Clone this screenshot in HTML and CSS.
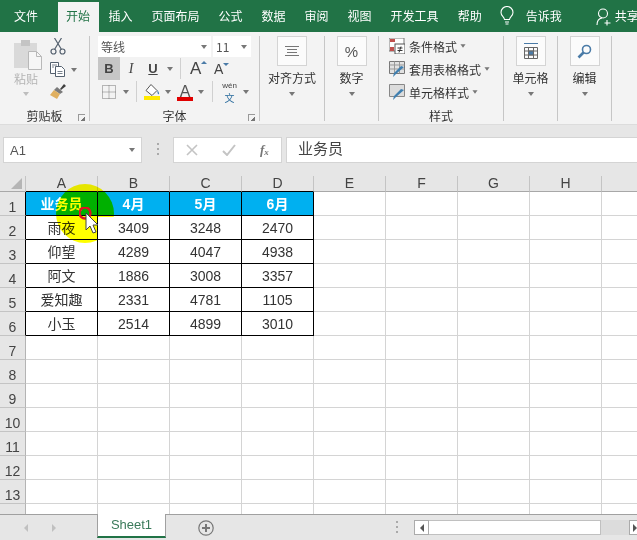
FILE: index.html
```html
<!DOCTYPE html>
<html lang="zh-CN">
<head>
    <meta charset="UTF-8">
    <title>Excel</title>
    <link rel="stylesheet" href="styles.css">
</head>
<body>
    <div class="window">
        <!-- Tabs -->
        <nav class="tabbar">
            <span class="tab tab-file">文件</span>
            <span class="tab tab-active">开始</span>
            <span class="tab">插入</span>
            <span class="tab">页面布局</span>
            <span class="tab">公式</span>
            <span class="tab">数据</span>
            <span class="tab">审阅</span>
            <span class="tab">视图</span>
            <span class="tab">开发工具</span>
            <span class="tab">帮助</span>
            <svg class="tab-bulb" width="14" height="20" viewBox="0 0 14 20" fill="none" stroke="#fff" stroke-width="1.1"><path d="M4.5 13.5C4 10.5 1 10 1 6.5a6 6 0 0 1 12 0c0 3.500-3 4-3.500 7z"/><path d="M5 16h4M5.500 18h3"/></svg>
            <span class="tab tab-tell">告诉我</span>
            <svg class="tab-person" width="15" height="18" viewBox="0 0 15 18" fill="none" stroke="#fff" stroke-width="1.1"><circle cx="7" cy="5.500" r="4.500"/><path d="M1 17c0-4 2-6.500 5-7M11 12v5.500M8.500 15h6"/></svg>
            <span class="tab-share">共享</span>
        </nav>

        <!-- Ribbon -->
        <section class="ribbon">
            <div class="group group-clip">
                <div class="group-body clip-body">
                    <div class="paste">
                        <svg class="paste-icon" width="28" height="30" viewBox="0 0 28 30"><rect y="3" width="23" height="25" fill="#d9d9d9"/><rect x="7" y="0" width="9" height="6" fill="#c4c4c4"/><path d="M14.500 11.500h8l5 5v13h-13z" fill="#f6f6f6" stroke="#b8b8b8"/><path d="M22.500 11.500v5h5" fill="none" stroke="#b8b8b8"/></svg>
                        <span class="paste-label">粘贴</span>
                        <span class="caret caret-light"></span>
                    </div>
                    <div class="clip-tools">
                        <svg width="16" height="17" viewBox="0 0 16 17" fill="none" stroke="#55616f" stroke-width="1.200"><circle cx="3.500" cy="13.500" r="2.500"/><circle cx="12.500" cy="13.500" r="2.500"/><path d="M4.500 11.500 11.500 0M11.500 11.500 4.500 0"/></svg>
                        <div class="tool-row">
                            <svg width="16" height="15" viewBox="0 0 16 15" fill="#fff" stroke="#55616f"><path d="M.5.5h8v11h-8z"/><path d="M5.500 4.500h6l3 3v7h-9z"/><path d="M2 3h5M2 5h2M7.500 9.500h5M7.500 11.500h5" fill="none" stroke-width=".8"/></svg>
                            <span class="caret"></span>
                        </div>
                        <svg width="16" height="15" viewBox="0 0 16 15"><path d="M10 5l4-5 2 2-5 4z" fill="#404040"/><path d="M7 3l6 5-3 2-6-4z" fill="#7a7a7a"/><path d="M4 6l6 4-3 5-7-4z" fill="#e0b060"/></svg>
                    </div>
                </div>
                <div class="group-label">剪贴板</div>
                <span class="launcher"></span>
            </div>

            <div class="group group-font">
                <div class="group-body font-body">
                    <div class="font-row font-combos">
                        <div class="combo combo-name"><span>等线</span><span class="caret"></span></div>
                        <div class="combo combo-size"><span>11</span><span class="caret"></span></div>
                    </div>
                    <div class="font-row">
                        <span class="fbtn fbtn-on"><b>B</b></span>
                        <span class="fbtn fbtn-i">I</span>
                        <span class="fbtn fbtn-u">U</span>
                        <span class="caret caret-u"></span>
                        <span class="font-sep sep-a"></span>
                        <span class="grow-a">A<i class="tip tip-up"></i></span>
                        <span class="grow-a grow-small">A<i class="tip tip-down"></i></span>
                    </div>
                    <div class="font-row">
                        <svg class="ico-border" width="14" height="14" viewBox="0 0 14 14" fill="none" stroke="#777" stroke-dasharray="1 1"><path d="M.5.5h13v13H.5zM7 .5v13M.5 7h13"/></svg>
                        <span class="caret caret-b"></span>
                        <span class="font-sep sep-b"></span>
                        <span class="fill-ico">
                            <svg width="16" height="12" viewBox="0 0 16 12" fill="#fff" stroke="#555"><path d="M7 .5l6 6-5 5-6-5z"/><path d="M13.500 6c1 2 2 3 1.500 4s-2 0-1.500-4z" fill="#3f7fb0" stroke="none"/></svg>
                            <span class="bar bar-yellow"></span>
                        </span>
                        <span class="caret caret-f"></span>
                        <span class="color-a">A<span class="bar bar-red"></span></span>
                        <span class="caret caret-f"></span>
                        <span class="font-sep sep-c"></span>
                        <span class="wen"><span class="wen-top">wén</span><span class="wen-zh">文</span></span>
                        <span class="caret caret-f"></span>
                    </div>
                </div>
                <div class="group-label">字体</div>
                <span class="launcher"></span>
            </div>

            <div class="group group-align">
                <div class="big-btn">
                    <span class="big-box"><svg width="14" height="10" viewBox="0 0 14 10" stroke="#777"><path d="M0 .5h14M2 3.500h10M2 6.500h10M0 9.500h14"/></svg></span>
                    <span class="big-label">对齐方式</span>
                    <span class="caret"></span>
                </div>
            </div>

            <div class="group group-num">
                <div class="big-btn">
                    <span class="big-box big-percent">%</span>
                    <span class="big-label">数字</span>
                    <span class="caret"></span>
                </div>
            </div>

            <div class="group group-style">
                <div class="group-body style-body">
                    <div class="style-row">
                        <svg width="16" height="16" viewBox="0 0 16 16"><rect width="15" height="13" fill="#fff" stroke="#777"/><rect x="1" y="1" width="5" height="3" fill="#c0504d"/><rect x="1" y="9" width="4" height="4" fill="#c0504d"/><rect x="6" y="6" width="10" height="10" fill="#fff" stroke="#555"/><path d="M8.500 10h5M8.500 12.500h5M12 8.500l-2 6" stroke="#333" fill="none"/></svg>
                        <span>条件格式</span><span class="caret"></span>
                    </div>
                    <div class="style-row">
                        <svg width="16" height="16" viewBox="0 0 16 16"><path d="M.5.5h15v12H.5z" fill="#e2e2e2" stroke="#777"/><path d="M.5 4h15M5.500.5v12M10.500.5v12M.5 8h15" stroke="#999"/><path d="M15 6l-8 7-3 3 1-4 7-7z" fill="#3f7fb0"/></svg>
                        <span>套用表格格式</span><span class="caret"></span>
                    </div>
                    <div class="style-row">
                        <svg width="16" height="16" viewBox="0 0 16 16"><path d="M.5.5h15v12H.5z" fill="#dcdcdc" stroke="#888"/><path d="M15 6l-8 7-3 3 1-4 7-7z" fill="#3f7fb0"/></svg>
                        <span>单元格样式</span><span class="caret"></span>
                    </div>
                </div>
                <div class="group-label">样式</div>
            </div>

            <div class="group group-cells">
                <div class="big-btn">
                    <span class="big-box"><svg width="16" height="16" viewBox="0 0 16 16" fill="none" stroke="#666"><path d="M1.500 4.500h13v11h-13zM1.500 8h13M1.500 12h13M5.500 4.500v11M10.500 4.500v11"/><path d="M1 .5h14" stroke="#4a7ba7"/><rect x="5.500" y="8" width="5" height="4" fill="#4a7ba7"/></svg></span>
                    <span class="big-label">单元格</span>
                    <span class="caret"></span>
                </div>
            </div>

            <div class="group group-edit">
                <div class="big-btn">
                    <span class="big-box"><svg width="15" height="15" viewBox="0 0 15 15" fill="none" stroke="#4a7ba7"><circle cx="9.500" cy="5.500" r="4" stroke-width="1.600"/><path d="M6.500 8.500 1.500 13.500" stroke-width="2.600"/></svg></span>
                    <span class="big-label">编辑</span>
                    <span class="caret"></span>
                </div>
            </div>
        </section>

        <!-- Formula bar -->
        <section class="formula-bar">
            <div class="name-box"><span>A1</span><span class="caret caret-name"></span></div>
            <span class="grip"></span>
            <div class="fx-box">
                <svg width="12" height="12" viewBox="0 0 12 12" stroke="#c4c4c4" stroke-width="1.600"><path d="M1 1l10 10M11 1 1 11"/></svg>
                <svg width="14" height="12" viewBox="0 0 14 12" fill="none" stroke="#c4c4c4" stroke-width="2"><path d="M1 7l4 4 8-10"/></svg>
                <span class="fx-text">f<sub>x</sub></span>
            </div>
            <div class="formula-input">业务员</div>
        </section>

        <!-- Sheet -->
        <section class="sheet">
            <table class="grid">
                <tr class="head">
                    <th class="corner"><span class="corner-mark"></span></th>
                    <th class="dark-b">A</th><th class="dark-b">B</th><th class="dark-b">C</th><th class="dark-b">D</th>
                    <th>E</th><th>F</th><th>G</th><th>H</th><th></th>
                </tr>
                <tr><th class="dark-r">1</th><td class="cell title">业务员</td><td class="cell title">4月</td><td class="cell title">5月</td><td class="cell title">6月</td><td></td><td></td><td></td><td></td><td></td></tr>
                <tr><th class="dark-r">2</th><td class="cell">雨夜</td><td class="cell">3409</td><td class="cell">3248</td><td class="cell">2470</td><td></td><td></td><td></td><td></td><td></td></tr>
                <tr><th class="dark-r">3</th><td class="cell">仰望</td><td class="cell">4289</td><td class="cell">4047</td><td class="cell">4938</td><td></td><td></td><td></td><td></td><td></td></tr>
                <tr><th class="dark-r">4</th><td class="cell">阿文</td><td class="cell">1886</td><td class="cell">3008</td><td class="cell">3357</td><td></td><td></td><td></td><td></td><td></td></tr>
                <tr><th class="dark-r">5</th><td class="cell">爱知趣</td><td class="cell">2331</td><td class="cell">4781</td><td class="cell">1105</td><td></td><td></td><td></td><td></td><td></td></tr>
                <tr><th class="dark-r">6</th><td class="cell">小玉</td><td class="cell">2514</td><td class="cell">4899</td><td class="cell">3010</td><td></td><td></td><td></td><td></td><td></td></tr>
                <tr><th>7</th><td></td><td></td><td></td><td></td><td></td><td></td><td></td><td></td><td></td></tr>
                <tr><th>8</th><td></td><td></td><td></td><td></td><td></td><td></td><td></td><td></td><td></td></tr>
                <tr><th>9</th><td></td><td></td><td></td><td></td><td></td><td></td><td></td><td></td><td></td></tr>
                <tr><th>10</th><td></td><td></td><td></td><td></td><td></td><td></td><td></td><td></td><td></td></tr>
                <tr><th>11</th><td></td><td></td><td></td><td></td><td></td><td></td><td></td><td></td><td></td></tr>
                <tr><th>12</th><td></td><td></td><td></td><td></td><td></td><td></td><td></td><td></td><td></td></tr>
                <tr><th>13</th><td></td><td></td><td></td><td></td><td></td><td></td><td></td><td></td><td></td></tr>
                <tr><th></th><td></td><td></td><td></td><td></td><td></td><td></td><td></td><td></td><td></td></tr>
            </table>
            <!-- Mouse highlight over the sheet -->
            <span class="mouse-spot"></span>
            <svg class="mouse-cursor" width="20" height="30" viewBox="0 0 20 30"><circle cx="6" cy="6" r="5.500" fill="none" stroke="#e01224" stroke-width="2.400"/><path d="M7 6v17l4-4 3 7 3-1-3-7h5z" fill="#fff" stroke="#444"/></svg>
        </section>

        <!-- Sheet tabs -->
        <footer class="statusbar">
            <div class="sheet-nav">
                <span class="nav-arrow nav-left"></span>
                <span class="nav-arrow nav-right"></span>
            </div>
            <div class="sheet-tab">Sheet1</div>
            <span class="add-sheet">
                <svg width="16" height="16" viewBox="0 0 16 16" fill="none" stroke="#777"><circle cx="8" cy="8" r="7.200" stroke-width="1.200"/><path d="M8 4v8M4 8h8" stroke-width="2"/></svg>
            </span>
            <span class="grip grip-bottom"></span>
            <div class="hscroll">
                <span class="scroll-btn"><i class="nav-arrow nav-left nav-dark"></i></span>
                <span class="scroll-thumb"></span>
                <span class="scroll-track"></span>
                <span class="scroll-btn scroll-end"><i class="nav-arrow nav-right nav-dark"></i></span>
            </div>
        </footer>
    </div>
</body>
</html>
```

FILE: styles.css
```css
* {
    margin: 0;
    padding: 0;
    box-sizing: border-box;
}

body {
    font-family: "Noto Sans CJK SC", "Liberation Sans", sans-serif;
    font-size: 12px;
    color: #444;
    background: #fff;
    overflow: hidden;
}

.window {
    width: 637px;
    height: 540px;
    display: flex;
    flex-direction: column;
    overflow: hidden;
}

.caret {
    display: inline-block;
    width: 0;
    height: 0;
    border-left: 3.500px solid transparent;
    border-right: 3.500px solid transparent;
    border-top: 4px solid #777;
    flex: none;
}

.caret-light {
    border-top-color: #bdbdbd;
}

/* Tabs */
.tabbar {
    height: 32px;
    flex: none;
    background: #217346;
    display: flex;
    align-items: flex-end;
    color: #fff;
    white-space: nowrap;
    overflow: hidden;
}

.tab {
    height: 30px;
    line-height: 28px;
    padding: 0 9.500px;
    flex: none;
}

.tab-file {
    width: 58px;
    padding-left: 14px;
}

.tab-active {
    background: #f3f3f3;
    color: #217346;
    padding: 0 9px 0 8px;
}

.tab-bulb {
    margin: 0 0 6px 8.500px;
    flex: none;
}

.tab-tell {
    padding-left: 12px;
}

.tab-person {
    margin: 0 0 6px 24.500px;
    flex: none;
}

.tab-share {
    height: 30px;
    line-height: 28px;
    margin-left: 4px;
    flex: none;
}

/* Ribbon */
.ribbon {
    height: 93px;
    flex: none;
    background: #f3f3f3;
    border-bottom: 1px solid #dcdcdc;
    padding: 4px 0;
    display: flex;
    align-items: flex-start;
}

.group {
    height: 85px;
    flex: none;
    position: relative;
    display: flex;
    flex-direction: column;
    border-right: 1px solid #c6c6c6;
}

.group-body {
    flex: 1;
    min-height: 0;
}

.group-label {
    height: 16px;
    line-height: 16px;
    margin-bottom: -3px;
    text-align: center;
    color: #333;
}

.launcher {
    position: absolute;
    right: 4px;
    bottom: 0;
    width: 7px;
    height: 7px;
    border-left: 1px solid #999;
    border-top: 1px solid #999;
    background: linear-gradient(135deg, transparent 60%, #777 60%);
}

.group-clip { width: 90px; }
.group-font { width: 170px; }
.group-align { width: 65px; }
.group-num { width: 54px; }
.group-style { width: 125px; }
.group-cells { width: 54px; }
.group-edit { width: 54px; }

/* Clipboard */
.clip-body {
    display: flex;
}

.paste {
    width: 50px;
    padding: 4px 0 0 2px;
    display: flex;
    flex-direction: column;
    align-items: center;
}

.paste-icon {
    margin-left: 4px;
}

.paste-label {
    color: #b4b4b4;
    line-height: 18px;
}

.paste .caret {
    margin-top: 4px;
}

.clip-tools {
    display: flex;
    flex-direction: column;
    gap: 7px;
    padding-top: 2px;
}

.tool-row {
    display: flex;
    align-items: center;
    gap: 5px;
}

/* Font */
.font-body {
    padding-left: 8px;
    display: flex;
    flex-direction: column;
}

.font-row {
    height: 23px;
    display: flex;
    align-items: center;
}

.font-combos {
    height: 21px;
    gap: 2px;
}

.combo {
    height: 21px;
    background: #fff;
    display: flex;
    align-items: center;
    justify-content: space-between;
    padding: 0 4px 0 3px;
    color: #555;
}

.combo-name { width: 113px; }
.combo-size { width: 38px; }

.fbtn {
    width: 22px;
    height: 23px;
    line-height: 23px;
    text-align: center;
    font-family: "Liberation Sans", sans-serif;
    font-size: 13px;
}

.fbtn-on {
    background: #c6c6c6;
}

.fbtn-i {
    font-family: "Liberation Serif", serif;
    font-style: italic;
    font-size: 14px;
}

.fbtn-u {
    font-weight: bold;
    text-decoration: underline;
}

.caret-u {
    margin-left: 3px;
}

.font-sep {
    width: 1px;
    height: 21px;
    background: #d0d0d0;
    flex: none;
}

.sep-a {
    margin: 0 9px 0 7px;
}

.grow-a {
    position: relative;
    font: 17px "Liberation Sans", sans-serif;
    width: 22px;
}

.grow-small {
    font-size: 14px;
    margin-left: 2px;
}

.tip {
    position: absolute;
    top: 2px;
    left: 11px;
    width: 0;
    height: 0;
    border-left: 3px solid transparent;
    border-right: 3px solid transparent;
}

.tip-up {
    border-bottom: 3px solid #4a7ba7;
}

.tip-down {
    border-top: 3px solid #4a7ba7;
    left: 9px;
}

.ico-border {
    margin-left: 4px;
    flex: none;
}

.caret-b {
    margin-left: 7px;
}

.sep-b {
    margin: 0 7px 0 7px;
}

.caret-f {
    margin-left: 5px;
}

.fill-ico {
    width: 16px;
    display: flex;
    flex-direction: column;
}

.bar {
    display: block;
    height: 4px;
}

.bar-yellow {
    background: #ffe900;
}

.bar-red {
    background: #e00000;
    width: 16px;
    margin-top: -3px;
}

.color-a {
    width: 16px;
    margin-left: 6px;
    font: 16px/17px "Liberation Sans", sans-serif;
    text-align: center;
    color: #555;
}

.sep-c {
    margin: 0 8px 0 8px;
}

.wen {
    width: 17px;
    display: flex;
    flex-direction: column;
    align-items: center;
}

.wen-top {
    font: 8px/9px "Liberation Sans", sans-serif;
    white-space: nowrap;
    padding-top: 2px;
}

.wen-zh {
    font-size: 10px;
    line-height: 15px;
    color: #2f6f9f;
}

/* Big buttons */
.big-btn {
    display: flex;
    flex-direction: column;
    align-items: center;
}

.big-box {
    width: 30px;
    height: 30px;
    background: #fbfbfb;
    border: 1px solid #d4d4d4;
    display: flex;
    align-items: center;
    justify-content: center;
}

.big-percent {
    font: 15px "Liberation Sans", sans-serif;
    color: #555;
}

.big-label {
    margin-top: 3px;
    line-height: 18px;
    color: #333;
    white-space: nowrap;
}

.big-btn .caret {
    margin-top: 5px;
}

/* Styles */
.style-body {
    padding: 1px 0 0 10px;
    display: flex;
    flex-direction: column;
    gap: 5px;
}

.style-row {
    height: 18px;
    display: flex;
    align-items: center;
    color: #333;
    white-space: nowrap;
}

.style-row svg {
    margin-right: 4px;
    flex: none;
}

.style-row .caret {
    margin-left: 3px;
    transform: scale(.85);
}

/* Formula bar */
.formula-bar {
    height: 51px;
    flex: none;
    background: #e6e6e6;
    padding: 12px 0 13px 3px;
    display: flex;
    align-items: stretch;
}

.name-box {
    width: 139px;
    background: #fff;
    border: 1px solid #d4d4d4;
    display: flex;
    align-items: center;
    justify-content: space-between;
    padding: 0 6px 0 6px;
    font: 13px "Liberation Sans", sans-serif;
    color: #555;
}

.grip {
    width: 2px;
    margin: 6px 14px 6px 15px;
    background: repeating-linear-gradient(180deg, #aaa 0 2px, transparent 2px 5px);
}

.fx-box {
    width: 109px;
    background: #fff;
    border: 1px solid #d4d4d4;
    display: flex;
    align-items: center;
    padding-left: 12px;
    gap: 24px;
}

.fx-text {
    font: italic bold 13px "Liberation Serif", serif;
    color: #777;
}

.fx-text sub {
    font-size: 9px;
    vertical-align: -1px;
}

.formula-input {
    flex: 1;
    margin-left: 4px;
    background: #fff;
    border: 1px solid #d4d4d4;
    border-right: 0;
    padding-left: 11px;
    font-size: 15px;
    line-height: 20px;
    color: #444;
}

/* Sheet */
.sheet {
    flex: 1;
    min-height: 0;
    position: relative;
    overflow: hidden;
    background: #fff;
}

.grid {
    width: 674px;
    table-layout: fixed;
    border-collapse: separate;
    border-spacing: 0;
    font: 14px "Liberation Sans", "Noto Sans CJK SC", sans-serif;
    color: #333;
}

.grid th {
    width: 72px;
    height: 24px;
    background: #e6e6e6;
    border-right: 1px solid #b4b4b4;
    border-bottom: 1px solid #c4c4c4;
    font-weight: normal;
    color: #444;
    padding-top: 7px;
    line-height: 16px;
}

.grid tr th:first-child {
    width: 26px;
}

.grid .head th {
    height: 16px;
    line-height: 15px;
    padding: 0;
    border-right-color: #c4c4c4;
    border-bottom-color: #a8a8a8;
}

.grid td {
    height: 24px;
    border-right: 1px solid #d4d4d4;
    border-bottom: 1px solid #d4d4d4;
    text-align: center;
}

.grid .head .dark-b {
    border-bottom-color: #000;
}

.grid th.dark-r {
    border-right-color: #000;
}

.grid .cell {
    border-right-color: #000;
    border-bottom-color: #000;
    padding-top: 1px;
    line-height: 20px;
}

.grid .title {
    background: #00b0f0;
    color: #fff;
    font-weight: bold;
}

.corner {
    position: relative;
}

.corner-mark {
    position: absolute;
    right: 3px;
    bottom: 2px;
    width: 0;
    height: 0;
    border-left: 11px solid transparent;
    border-bottom: 11px solid #b5b5b5;
}

/* yellow multiplied over the blue header gives the green */
.mouse-spot {
    position: absolute;
    left: 56px;
    top: 8px;
    width: 58px;
    height: 59px;
    border-radius: 50%;
    background: #ffff00;
    mix-blend-mode: multiply;
    clip-path: polygon(0 0, 100% 0, 100% 33px, 42px 33px, 42px 100%, 0 100%);
}

.mouse-cursor {
    position: absolute;
    left: 79px;
    top: 31px;
}

/* Sheet tabs */
.statusbar {
    height: 26px;
    flex: none;
    background: #e6e6e6;
    border-top: 1px solid #a0a0a0;
    display: flex;
    align-items: flex-start;
}

.sheet-nav {
    width: 97px;
    height: 25px;
    flex: none;
    padding-left: 24px;
    display: flex;
    align-items: center;
    gap: 24px;
}

.nav-arrow {
    display: inline-block;
    width: 0;
    height: 0;
    border-top: 4px solid transparent;
    border-bottom: 4px solid transparent;
}

.nav-left {
    border-right: 4px solid #c0c0c0;
}

.nav-right {
    border-left: 4px solid #c0c0c0;
}

.nav-dark.nav-left {
    border-right-color: #555;
}

.nav-dark.nav-right {
    border-left-color: #555;
}

.sheet-tab {
    width: 69px;
    height: 24px;
    flex: none;
    margin-top: -1px;
    background: #fff;
    border-left: 1px solid #a0a0a0;
    border-right: 1px solid #a0a0a0;
    border-bottom: 2px solid #217346;
    text-align: center;
    font: 13px/22px "Liberation Sans", sans-serif;
    color: #3a7a5a;
}

.add-sheet {
    margin: 5px 0 0 32px;
    height: 16px;
    flex: none;
}

.grip-bottom {
    height: 14px;
    flex: none;
    margin: 6px 16px 0 182px;
}

.hscroll {
    flex: 1;
    min-width: 0;
    height: 15px;
    margin-top: 5px;
    display: flex;
    overflow: hidden;
}

.scroll-btn {
    width: 15px;
    background: #fff;
    border: 1px solid #ababab;
    display: flex;
    align-items: center;
    justify-content: center;
    flex: none;
}

.scroll-thumb {
    width: 172px;
    background: #fff;
    border: 1px solid #c0c0c0;
    border-left: 0;
    flex: none;
}

.scroll-track {
    width: 28px;
    background: #dcdcdc;
    flex: none;
}

.scroll-end {
    justify-content: flex-start;
    padding-left: 3px;
}
```
